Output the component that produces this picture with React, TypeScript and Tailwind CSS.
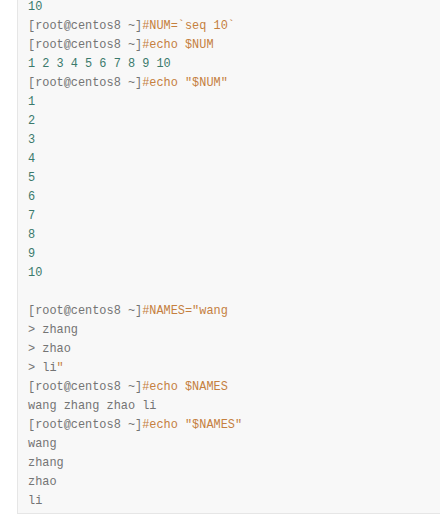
import React from 'react';

type Line = { p?: string; c?: string; o?: string; n?: string };

const lines: Line[] = [
    { n: '10' },
    { p: '[root@centos8 ~]', c: '#NUM=`seq 10`' },
    { p: '[root@centos8 ~]', c: '#echo $NUM' },
    { n: '1 2 3 4 5 6 7 8 9 10' },
    { p: '[root@centos8 ~]', c: '#echo "$NUM"' },
    { n: '1' },
    { n: '2' },
    { n: '3' },
    { n: '4' },
    { n: '5' },
    { n: '6' },
    { n: '7' },
    { n: '8' },
    { n: '9' },
    { n: '10' },
    { o: '' },
    { p: '[root@centos8 ~]', c: '#NAMES="wang' },
    { p: '> zhang' },
    { p: '> zhao' },
    { p: '> li', c: '"' },
    { p: '[root@centos8 ~]', c: '#echo $NAMES' },
    { o: 'wang zhang zhao li' },
    { p: '[root@centos8 ~]', c: '#echo "$NAMES"' },
    { o: 'wang' },
    { o: 'zhang' },
    { o: 'zhao' },
    { o: 'li' },
];

const App: React.FC = () => {
    return (
        <div className="w-[440px] h-[519px] bg-white overflow-hidden">
            {/* code block */}
            <div className="ml-[17px] w-[440px] h-[516px] bg-[#f8f8f8] border-l border-b border-[#e6e6e6] pl-[10px] -mt-[2px] font-['Liberation_Mono',monospace] text-[11.9px] leading-[19px]">
                {lines.map((l, i) => (
                    <div key={i} className="h-[19px] whitespace-pre">
                        {l.n !== undefined && <span className="text-[#3b7a6c]">{l.n}</span>}
                        {l.p !== undefined && <span className="text-[#747474]">{l.p}</span>}
                        {l.c !== undefined && <span className="text-[#c5803f]">{l.c}</span>}
                        {l.o !== undefined && <span className="text-[#747474]">{l.o}</span>}
                    </div>
                ))}
            </div>
        </div>
    );
};

export default App;
